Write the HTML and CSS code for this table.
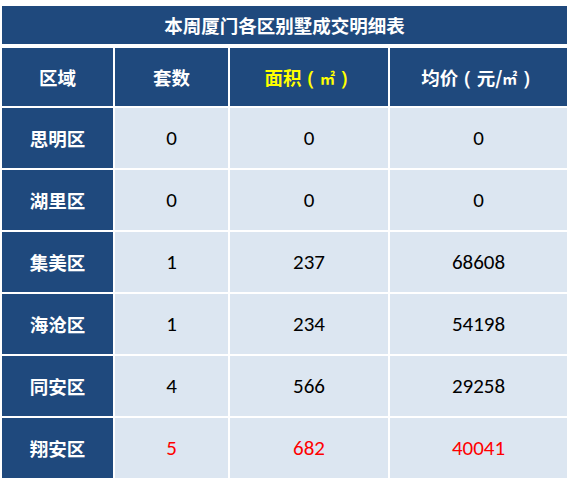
FILE: index.html
```html
<!DOCTYPE html>
<html lang="zh-CN">
<head>
<meta charset="utf-8">
<title>本周厦门各区别墅成交明细表</title>
<link rel="stylesheet" href="styles.css">
</head>
<body>
<div class="sheet">
  <div class="title">本周厦门各区别墅成交明细表</div>

  <div class="head">区域</div>
  <div class="head">套数</div>
  <div class="head yellow">面积<span class="p">(</span><span class="sq">㎡</span><span class="p">)</span></div>
  <div class="head">均价<span class="p">(</span>元/<span class="sq">㎡</span><span class="p">)</span></div>

  <div class="name">思明区</div>
  <div class="num">0</div>
  <div class="num">0</div>
  <div class="num">0</div>

  <div class="name">湖里区</div>
  <div class="num">0</div>
  <div class="num">0</div>
  <div class="num">0</div>

  <div class="name">集美区</div>
  <div class="num">1</div>
  <div class="num">237</div>
  <div class="num">68608</div>

  <div class="name">海沧区</div>
  <div class="num">1</div>
  <div class="num">234</div>
  <div class="num">54198</div>

  <div class="name">同安区</div>
  <div class="num">4</div>
  <div class="num">566</div>
  <div class="num">29258</div>

  <div class="name">翔安区</div>
  <div class="num red">5</div>
  <div class="num red">682</div>
  <div class="num red">40041</div>
</div>
</body>
</html>
```

FILE: styles.css
```css
html, body {
  margin: 0;
  padding: 0;
  background: #ffffff;
}

.sheet {
  display: grid;
  grid-template-columns: 111px 113px 158px 177px;
  grid-template-rows: 38px repeat(7, 60px);
  column-gap: 2px;
  row-gap: 2px;
  margin: 6px 0 0 2px;
  width: 565px;
}

.title {
  grid-column: 1 / -1;
  background: #1f497d;
  color: #ffffff;
  font-family: "Noto Sans CJK SC", sans-serif;
  font-weight: 700;
  font-size: 18.5px;
  display: flex;
  align-items: center;
  justify-content: center;
  margin-bottom: 2px;
  height: 38px;
}

.head,
.name {
  background: #1f497d;
  color: #ffffff;
  font-family: "Noto Sans CJK SC", sans-serif;
  font-weight: 700;
  font-size: 18.5px;
  display: flex;
  align-items: center;
  justify-content: center;
}

.head {
  margin-top: 2px;
}

.p {
  display: inline-block;
  width: 18.5px;
  text-align: center;
  font-family: "Open Sans", "Noto Sans", sans-serif;
  font-weight: 600;
  font-size: 20px;
}

.sq {
  font-size: 15px;
}

.yellow {
  color: #ffff00;
}

.num {
  background: #dce6f1;
  color: #000000;
  font-family: "Carlito", "Lato", "Noto Sans", sans-serif;
  font-size: 21px;
  display: flex;
  align-items: center;
  justify-content: center;
}

.red {
  color: #ff0000;
}
```
